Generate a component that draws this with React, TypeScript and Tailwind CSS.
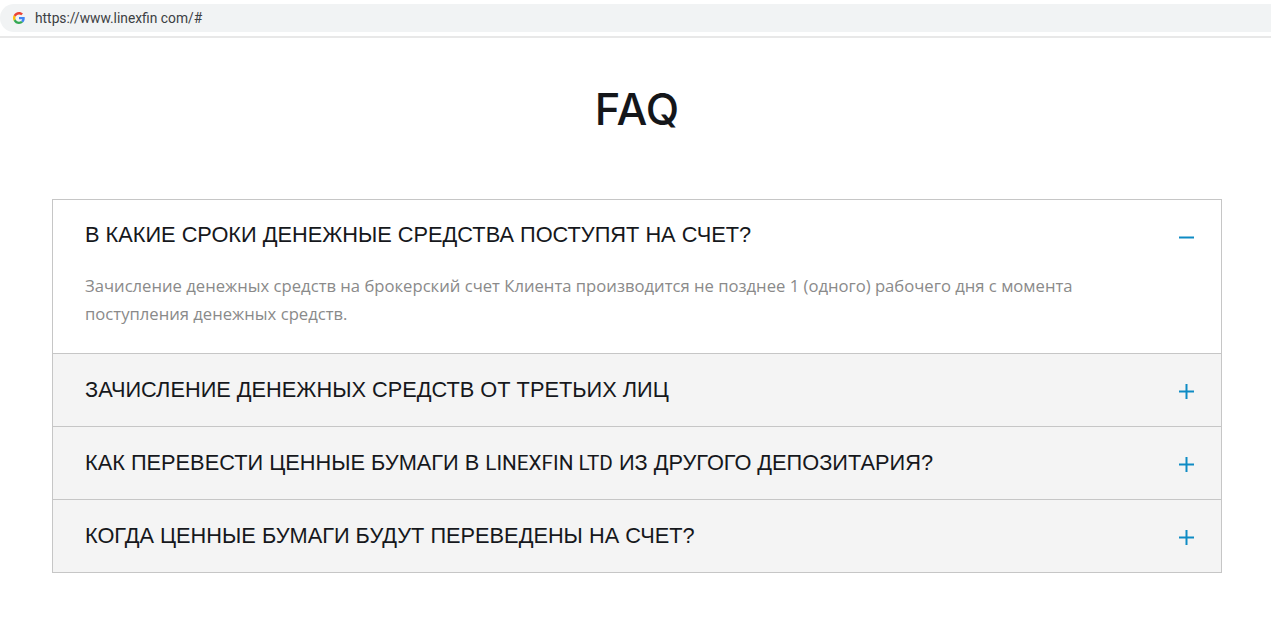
const faqs = [
  <>ЗАЧИСЛЕНИЕ ДЕНЕЖНЫХ СРЕДСТВ ОТ ТРЕТЬИХ ЛИЦ</>,
  <>КАК ПЕРЕВЕСТИ ЦЕННЫЕ БУМАГИ В <span className="font-['Roboto',sans-serif] text-[20.700px]">LINEXFIN LTD</span> ИЗ ДРУГОГО ДЕПОЗИТАРИЯ?</>,
  <>КОГДА ЦЕННЫЕ БУМАГИ БУДУТ ПЕРЕВЕДЕНЫ НА СЧЕТ?</>,
]

function GoogleIcon() {
  return (
    <svg width="12" height="12" viewBox="0 0 48 48">
      <path fill="#EA4335" d="M24 9.500c3.500 0 6.700 1.300 9.100 3.500l6.800-6.800C35.800 2.400 30.200 0 24 0 14.600 0 6.500 5.400 2.600 13.200l7.900 6.200C12.400 13.700 17.700 9.500 24 9.500z" />
      <path fill="#4285F4" d="M47 24.500c0-1.600-.2-3.200-.4-4.500H24v9h13c-.6 3-2.300 5.500-4.800 7.200l7.700 6c4.400-4.200 7.100-10.300 7.100-17.700z" />
      <path fill="#FBBC05" d="M10.500 28.600c-.5-1.400-.8-3-.8-4.600s.3-3.200.8-4.600l-7.900-6.200C.9 16.500 0 20.100 0 24s.9 7.500 2.600 10.800l7.900-6.200z" />
      <path fill="#34A853" d="M24 48c6.500 0 11.900-2.100 15.900-5.800l-7.700-6c-2.100 1.400-4.900 2.300-8.200 2.300-6.300 0-11.600-4.200-13.500-9.900l-7.900 6.200C6.500 42.600 14.600 48 24 48z" />
    </svg>
  )
}

function Toggle({ open }: { open?: boolean }) {
  return (
    <svg width="15" height="15" viewBox="0 0 15 15" className={open ? 'mt-[4px] shrink-0' : 'mt-[2px] shrink-0'}>
      <path d={open ? 'M0 7.500H15' : 'M0 7.500H15M7.500 0V15'} stroke="#0e8bc4" strokeWidth="2" />
    </svg>
  )
}

export default function App() {
  return (
    <div className="h-[626px] overflow-hidden bg-white font-['Liberation_Sans',sans-serif]">
      <div className="h-[38px] border-b-2 border-[#e8e8e8] pt-1">
        <div className="flex h-[28px] w-full items-center gap-[10px] rounded-l-full bg-[#f1f3f4] pl-[13px]">
          <GoogleIcon />
          <span className="font-['Roboto',sans-serif] text-[13.800px] text-[#3c4043]">https://www.linexfin com/#</span>
        </div>
      </div>

      <h1 className="mt-[45px] pl-[3px] text-center font-['Inter',sans-serif] text-[43.500px] leading-[52px] font-medium text-[#14161a]">FAQ</h1>

      <div className="mx-[52px] mt-[64px] w-[1170px] border border-[#c6c6c6]">
        <div className="bg-white">
          <div className="flex h-[71px] items-center justify-between pr-[27px] pl-[32px]">
            <span className="text-[21.780px] text-[#16181c]">В КАКИЕ СРОКИ ДЕНЕЖНЫЕ СРЕДСТВА ПОСТУПЯТ НА СЧЕТ?</span>
            <Toggle open />
          </div>
          <p className="h-[82px] w-[1040px] pt-px pl-[32px] font-['Open_Sans',sans-serif] text-[16.650px] leading-[28px] text-[#8a8a8a]">
            Зачисление денежных средств на брокерский счет Клиента производится не позднее 1 (одного) рабочего дня с момента поступления денежных средств.
          </p>
        </div>
        {faqs.map((q, i) => (
          <div key={i} className="flex h-[73px] items-center justify-between border-t border-[#c6c6c6] bg-[#f4f4f4] pr-[27px] pl-[32px]">
            <span className="text-[21.780px] text-[#16181c]">{q}</span>
            <Toggle />
          </div>
        ))}
      </div>
    </div>
  )
}
